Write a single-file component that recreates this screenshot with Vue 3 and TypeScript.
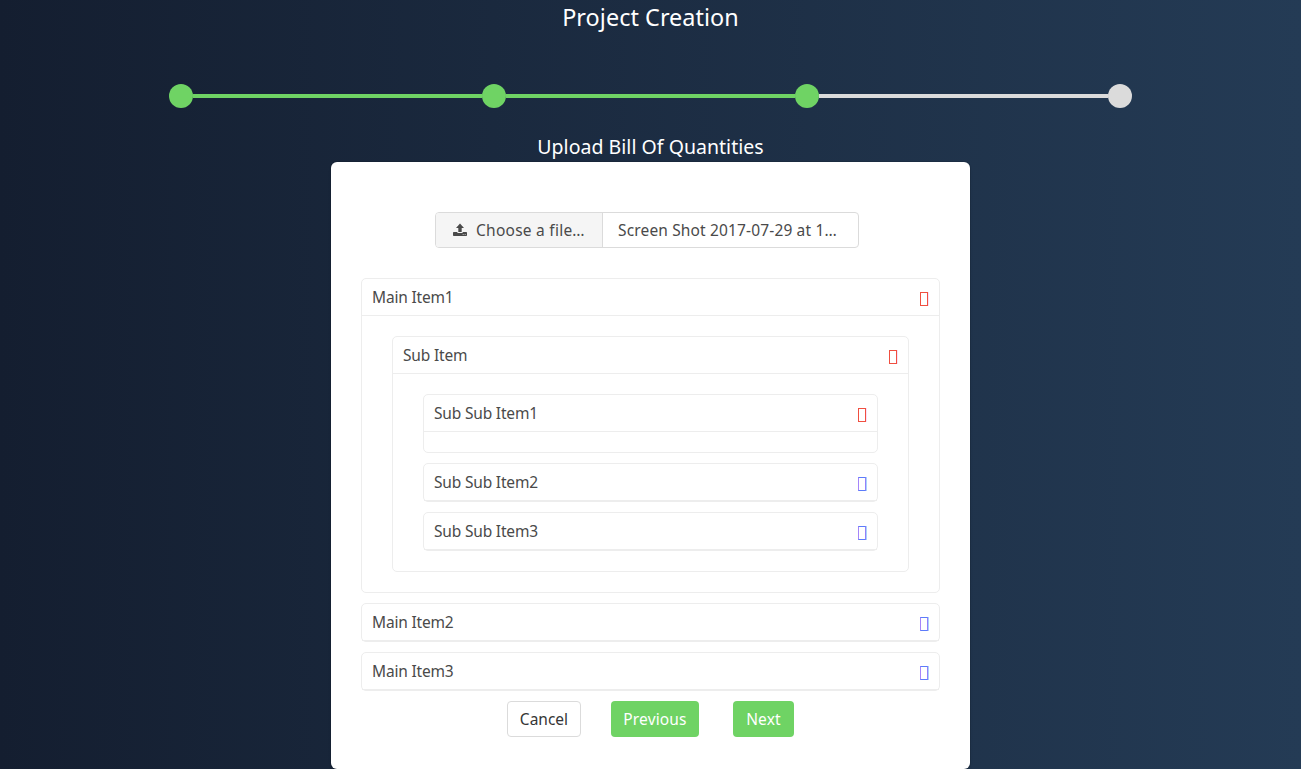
<script setup lang="ts">
import { h, type FunctionalComponent, type VNode } from 'vue'

interface Entry {
  title: string
  open?: boolean
  children?: Entry[]
}

const steps: boolean[] = [true, true, true, false]

const entries: Entry[] = [
  {
    title: 'Main Item1',
    open: true,
    children: [
      {
        title: 'Sub Item',
        open: true,
        children: [
          { title: 'Sub Sub Item1', open: true },
          { title: 'Sub Sub Item2' },
          { title: 'Sub Sub Item3' },
        ],
      },
    ],
  },
  { title: 'Main Item2' },
  { title: 'Main Item3' },
]

function renderEntry(entry: Entry): VNode {
  return h('article', { class: 'item', key: entry.title }, [
    h('header', { class: 'item-head' }, [
      h('span', { class: 'label' }, entry.title),
      h('span', { class: ['glyph', { opened: entry.open }] }),
    ]),
    entry.open
      ? h('div', { class: 'item-body' }, entry.children ? [renderList(entry.children)] : [])
      : null,
  ])
}

function renderList(list: Entry[]): VNode {
  return h('div', { class: 'item-list' }, list.map(renderEntry))
}

const Accordion: FunctionalComponent<{ list: Entry[] }> = (props) => renderList(props.list)
Accordion.props = ['list']
</script>

<template>
  <main class="page">
    <h1>Project Creation</h1>
    <div class="steps">
      <template v-for="(done, i) in steps" :key="i">
        <span v-if="i > 0" class="bar" :class="{ done }"></span>
        <span class="dot" :class="{ done }"></span>
      </template>
    </div>
    <h2>Upload Bill Of Quantities</h2>

    <section class="card">
      <div class="file">
        <span class="file-cta">
          <svg width="14" height="14" viewBox="0 0 14 14" fill="currentColor">
            <path d="M7 0.5 11 5H8.7V9H5.3V5H3z" />
            <path fill-rule="evenodd" d="M0.7 9H4.4V10H9.6V9H13.3Q14 9 14 9.7V12.3Q14 13 13.3 13H0.7Q0 13 0 12.3V9.7Q0 9 .7 9ZM9.7 11.2V12H10.6V11.2ZM11.7 11.2V12H12.6V11.2Z" />
          </svg>
          <span class="choose">Choose a file…</span>
        </span>
        <span class="file-name">Screen Shot 2017-07-29 at 1…</span>
      </div>

      <Accordion :list="entries" />

      <div class="actions">
        <button class="cancel" type="button">Cancel</button>
        <button class="primary previous" type="button">Previous</button>
        <button class="primary next" type="button">Next</button>
      </div>
    </section>
  </main>
</template>

<style>
body {
  margin: 0;
  background: #fff;
}
</style>

<style scoped>
.page,
.page :deep(*) {
  box-sizing: border-box;
}
.page {
  height: 769px;
  background: linear-gradient(to right, #141e30, #243b55);
  font-family: "Noto Sans", "Open Sans", sans-serif;
  font-size: 15.5px;
  color: #4a4a4a;
  display: flex;
  flex-direction: column;
  align-items: center;
}
h1,
h2 {
  margin: 0;
  flex: none;
  font-weight: 400;
  color: #fff;
  white-space: nowrap;
}
h1 {
  height: 84px;
  font-size: 23.4px;
  line-height: 35px;
  letter-spacing: 0.05px;
}
.steps {
  display: flex;
  align-items: center;
  width: 963px;
  height: 24px;
}
.dot {
  width: 24px;
  height: 24px;
  border-radius: 50%;
  background: #dbdbdb;
}
.bar {
  flex: 1;
  height: 4px;
  background: #dbdbdb;
}
.dot.done,
.bar.done {
  background: #6fd364;
}
h2 {
  height: 54px;
  padding-top: 24px;
  font-size: 19.5px;
  line-height: 30px;
  letter-spacing: 0.03px;
}
.card {
  width: 639px;
  height: 607px;
  flex: none;
  padding: 50px 30px 0;
  background: #fff;
  border-radius: 6px;
  box-shadow: 0 2px 3px rgba(10, 10, 10, 0.1), 0 0 0 1px rgba(10, 10, 10, 0.1);
}
.file {
  display: flex;
  width: 424px;
  height: 36px;
  margin: 0 0 30px 74px;
  border: 1px solid #dbdbdb;
  border-radius: 4px;
  overflow: hidden;
  white-space: nowrap;
}
.file-cta {
  display: flex;
  align-items: center;
  gap: 9px;
  width: 167px;
  padding-left: 17px;
  background: #f5f5f5;
  border-right: 1px solid #dbdbdb;
}
.file-name {
  line-height: 34px;
  padding-left: 15px;
  letter-spacing: 0.15px;
}
.choose {
  letter-spacing: 0.25px;
}
.card :deep(.item-list) {
  display: flex;
  flex-direction: column;
  gap: 10px;
}
.card :deep(.item) {
  border: 1px solid #ededed;
  border-radius: 5px;
}
.card :deep(.item-head) {
  display: flex;
  justify-content: space-between;
  height: 37px;
  padding: 0 11px 0 10px;
  border-bottom: 1px solid #ededed;
  line-height: 36px;
}
.card :deep(.label) {
  letter-spacing: -0.18px;
}
.card :deep(.glyph) {
  width: 8px;
  height: 14px;
  margin-top: 13px;
  border: 1px solid #5b7cfa;
  border-left-color: #a585fa;
  border-right-color: #9380fa;
  box-shadow: 1px 0 0 #a9d4fb;
}
.card :deep(.glyph.opened) {
  border-color: #f04f40;
  box-shadow: 1px 0 0 #f9dff9;
}
.card :deep(.item-body) {
  padding: 0 30px 20px;
}
.card :deep(.item-body > .item-list) {
  padding-top: 20px;
}
.actions {
  display: flex;
  margin: 10px 0 0 146px;
}
button {
  height: 36px;
  padding: 0;
  border: 1px solid transparent;
  border-radius: 4px;
  font: inherit;
  letter-spacing: 0.15px;
}
.cancel {
  width: 74px;
  margin-right: 30px;
  background: #fff;
  border-color: #dbdbdb;
  color: #363636;
  letter-spacing: 0;
}
.primary {
  background: #6fd364;
  color: #fff;
}
.previous {
  width: 88px;
  margin-right: 34px;
}
.next {
  width: 61px;
}
</style>
